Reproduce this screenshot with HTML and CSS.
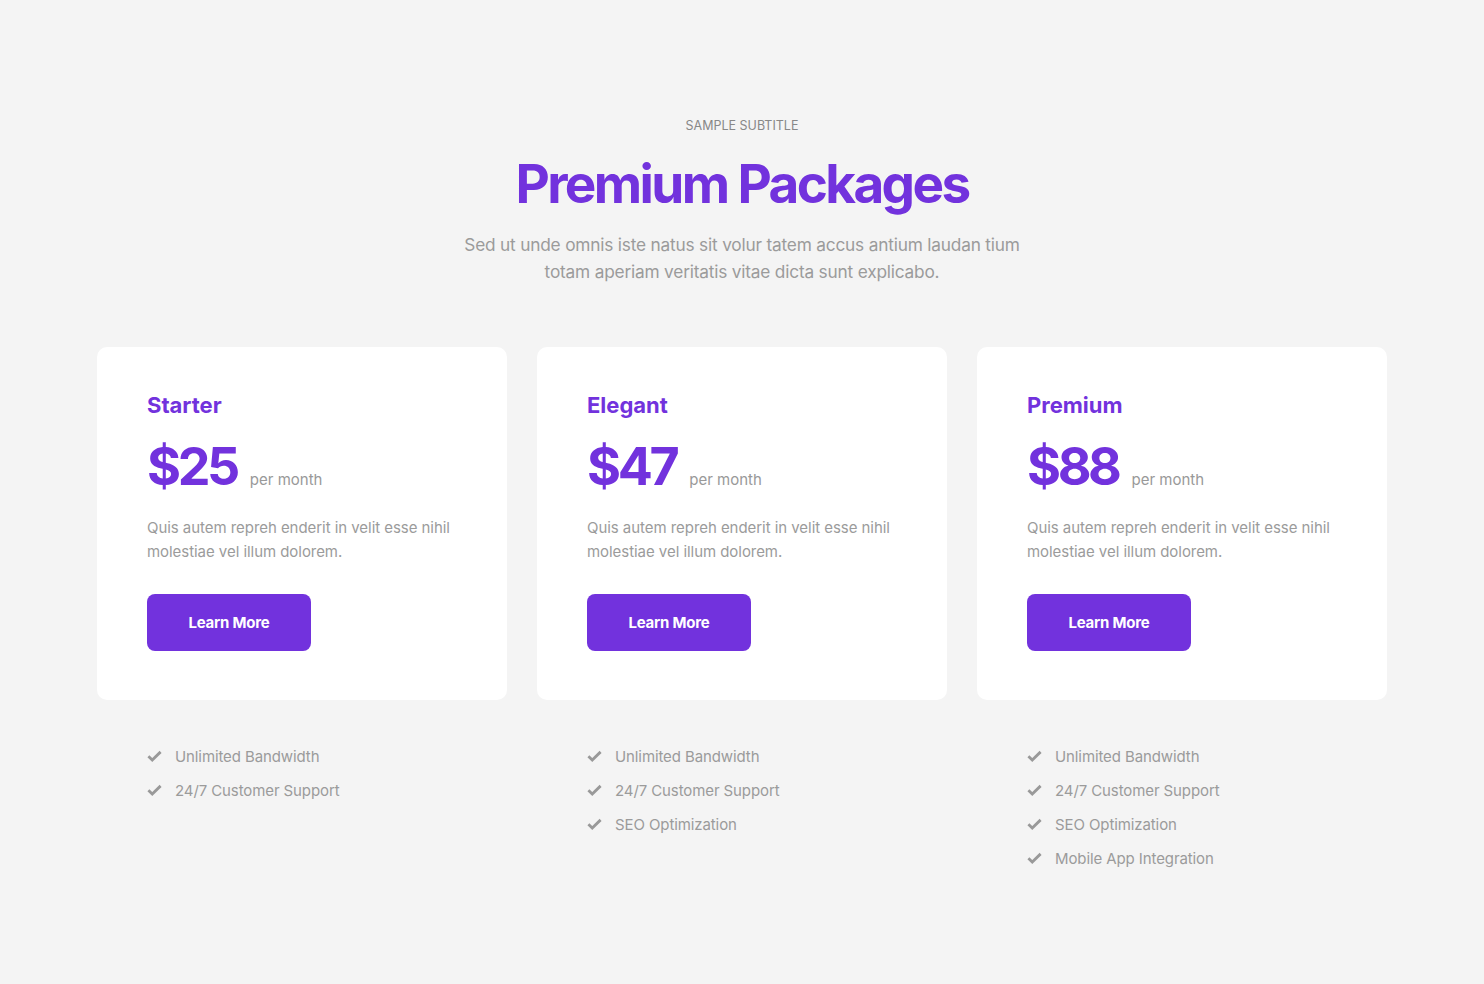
FILE: index.html
```html
<!DOCTYPE html>
<html lang="en">
<head>
<meta charset="utf-8">
<title>Premium Packages</title>
<link rel="stylesheet" href="styles.css">
</head>
<body>
<section class="pricing">
  <header class="pricing-head">
    <p class="subtitle">SAMPLE SUBTITLE</p>
    <h1 class="title">Premium Packages</h1>
    <p class="lead">Sed ut unde omnis iste natus sit volur tatem accus antium laudan tium<br>totam aperiam veritatis vitae dicta sunt explicabo.</p>
  </header>
  <div class="plans">
    <div class="plan">
      <div class="card">
        <h2 class="plan-name">Starter</h2>
        <div class="price"><span class="amount">$25</span><span class="period">per month</span></div>
        <p class="desc">Quis autem repreh enderit in velit esse nihil molestiae vel illum dolorem.</p>
        <a class="btn" href="#">Learn More</a>
      </div>
      <ul class="features">
        <li><svg class="check" viewBox="0 0 16 12"><path d="M1.5 6.2 L5.6 10.2 L14.5 1.6" /></svg>Unlimited Bandwidth</li>
        <li><svg class="check" viewBox="0 0 16 12"><path d="M1.5 6.2 L5.6 10.2 L14.5 1.6" /></svg>24/7 Customer Support</li>
      </ul>
    </div>
    <div class="plan">
      <div class="card">
        <h2 class="plan-name">Elegant</h2>
        <div class="price"><span class="amount">$47</span><span class="period">per month</span></div>
        <p class="desc">Quis autem repreh enderit in velit esse nihil molestiae vel illum dolorem.</p>
        <a class="btn" href="#">Learn More</a>
      </div>
      <ul class="features">
        <li><svg class="check" viewBox="0 0 16 12"><path d="M1.5 6.2 L5.6 10.2 L14.5 1.6" /></svg>Unlimited Bandwidth</li>
        <li><svg class="check" viewBox="0 0 16 12"><path d="M1.5 6.2 L5.6 10.2 L14.5 1.6" /></svg>24/7 Customer Support</li>
        <li><svg class="check" viewBox="0 0 16 12"><path d="M1.5 6.2 L5.6 10.2 L14.5 1.6" /></svg>SEO Optimization</li>
      </ul>
    </div>
    <div class="plan">
      <div class="card">
        <h2 class="plan-name">Premium</h2>
        <div class="price"><span class="amount">$88</span><span class="period">per month</span></div>
        <p class="desc">Quis autem repreh enderit in velit esse nihil molestiae vel illum dolorem.</p>
        <a class="btn" href="#">Learn More</a>
      </div>
      <ul class="features">
        <li><svg class="check" viewBox="0 0 16 12"><path d="M1.5 6.2 L5.6 10.2 L14.5 1.6" /></svg>Unlimited Bandwidth</li>
        <li><svg class="check" viewBox="0 0 16 12"><path d="M1.5 6.2 L5.6 10.2 L14.5 1.6" /></svg>24/7 Customer Support</li>
        <li><svg class="check" viewBox="0 0 16 12"><path d="M1.5 6.2 L5.6 10.2 L14.5 1.6" /></svg>SEO Optimization</li>
        <li><svg class="check" viewBox="0 0 16 12"><path d="M1.5 6.2 L5.6 10.2 L14.5 1.6" /></svg>Mobile App Integration</li>
      </ul>
    </div>
  </div>
</section>
</body>
</html>
```
FILE: styles.css
```css
* { box-sizing: border-box; }
html, body { margin: 0; padding: 0; }
body {
  background: #f4f4f4;
  font-family: Inter, "Noto Sans", sans-serif;
  color: #999;
}
.pricing {
  padding-top: 118px;
  display: flex;
  flex-direction: column;
  align-items: center;
}
.pricing-head {
  text-align: center;
}
.subtitle {
  margin: 0;
  font-size: 12.5px;
  line-height: 16px;
  color: #888;
  letter-spacing: 0;
}
.title {
  margin: 20px 0 0;
  font-size: 53px;
  line-height: 60px;
  font-weight: 700;
  color: #7232dd;
  letter-spacing: -2.6px;
}
.lead {
  margin: 17px 0 0;
  font-size: 17.3px;
  line-height: 27px;
  color: #9b9b9b;
  letter-spacing: -0.2px;
}
.plans {
  margin-top: 62px;
  display: grid;
  grid-template-columns: repeat(3, 410px);
  column-gap: 30px;
}
.card {
  background: #fff;
  border-radius: 10px;
  height: 353px;
  padding: 44px 50px 0;
}
.plan-name {
  margin: 0;
  font-size: 22px;
  line-height: 28px;
  font-weight: 700;
  color: #7232dd;
  letter-spacing: 0;
}
.price {
  margin-top: 20px;
  display: flex;
  align-items: baseline;
  gap: 13px;
  height: 56px;
}
.amount {
  font-size: 52px;
  line-height: 56px;
  font-weight: 700;
  color: #7232dd;
  letter-spacing: -3.4px;
}
.period {
  font-size: 15px;
  color: #999;
  letter-spacing: 0;
}
.desc {
  margin: 21px 0 0;
  font-size: 15px;
  line-height: 24px;
  color: #9b9b9b;
  letter-spacing: -0.05px;
}
.btn {
  margin-top: 30px;
  display: inline-flex;
  align-items: center;
  justify-content: center;
  width: 164px;
  height: 57px;
  border-radius: 8px;
  background: #7232dd;
  color: #fff;
  text-decoration: none;
  font-size: 15px;
  font-weight: 700;
  letter-spacing: -0.2px;
}
.features {
  list-style: none;
  margin: 39px 0 0;
  padding: 0 0 0 50px;
}
.features li {
  display: flex;
  align-items: center;
  height: 34px;
  font-size: 15px;
  color: #9b9b9b;
  letter-spacing: -0.1px;
}
.check {
  width: 15px;
  height: 12px;
  margin-right: 13px;
  fill: none;
  stroke: #999;
  stroke-width: 3;
}
```
